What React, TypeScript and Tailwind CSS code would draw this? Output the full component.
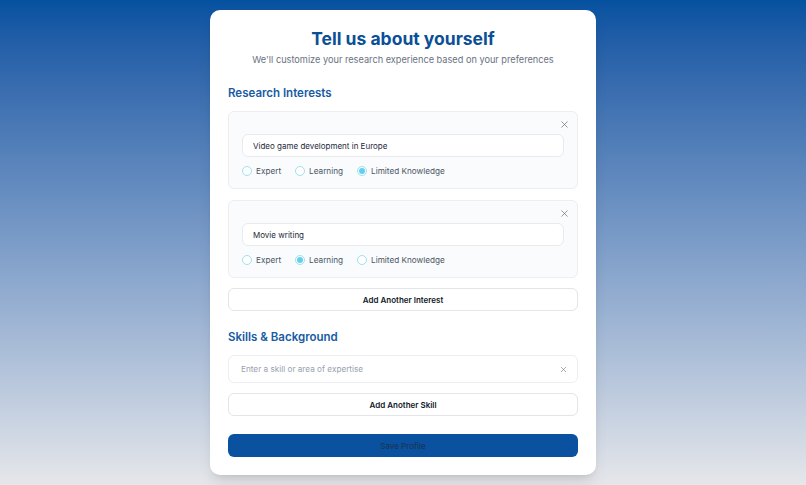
import React, { useState } from 'react';
import { X } from 'lucide-react';

type Level = 'Expert' | 'Learning' | 'Limited Knowledge';

const levels: Level[] = ['Expert', 'Learning', 'Limited Knowledge'];

function InterestCard({ topic, level }: { topic: string; level: Level }) {
  const [value, setValue] = useState<Level>(level);

  return (
    <div className="rounded-md border border-[#eceef1] bg-[#fafbfc] px-[13px] pt-[5px] pb-[11px]">
      <div className="-mr-[6px] flex h-[14px] items-center justify-end">
        <X className="h-[11px] w-[11px] text-gray-500" strokeWidth={1.6} />
      </div>
      <div className="mt-[3px] flex h-[23px] w-full items-center rounded-md border border-[#e8eaed] bg-white pl-[10px] text-[8px] text-gray-800">
        {topic}
      </div>
      <div className="mt-[8px] flex h-[12px] items-center gap-[14px]">
        {levels.map((l) => (
          <label key={l} className="flex cursor-pointer items-center gap-[4px]" onClick={() => setValue(l)}>
            <span className="flex h-[10px] w-[10px] items-center justify-center rounded-full border border-[#9fe0f2] bg-white">
              {value === l && <span className="h-[6px] w-[6px] rounded-full bg-[#5fd0ee]" />}
            </span>
            <span className="text-[8.2px] text-gray-600">{l}</span>
          </label>
        ))}
      </div>
    </div>
  );
}

function OutlineButton({ children }: { children: React.ReactNode }) {
  return (
    <button className="flex h-[23px] w-full items-center justify-center rounded-md border border-[#e3e5e8] bg-white text-[8px] font-semibold text-gray-900">
      {children}
    </button>
  );
}

export default function App() {
  return (
    <div
      className="flex min-h-screen justify-center bg-linear-to-b from-[#0451a0] to-[#e6e7ea] pt-[10px]"
      style={{ fontFamily: 'Inter, "Noto Sans", sans-serif' }}
    >
      <div className="h-[465px] w-[386px] rounded-[10px] bg-white px-[18px] pt-[17px] pb-[18px] shadow-lg">
        <h1 className="text-center text-[17.5px] leading-[23px] font-bold text-[#0b4f96]">Tell us about yourself</h1>
        <p className="mt-[4px] text-center text-[9.2px] leading-[12px] text-gray-500">
          We'll customize your research experience based on your preferences
        </p>

        <h2 className="mt-[20px] text-[11.5px] leading-[14px] font-semibold text-[#175ba4]">Research Interests</h2>
        <div className="mt-[11px] flex flex-col gap-[11px]">
          <InterestCard topic="Video game development in Europe" level="Limited Knowledge" />
          <InterestCard topic="Movie writing" level="Learning" />
        </div>
        <div className="mt-[10px]">
          <OutlineButton>Add Another Interest</OutlineButton>
        </div>

        <h2 className="mt-[19px] text-[11.5px] leading-[14px] font-semibold text-[#175ba4]">Skills &amp; Background</h2>
        <div className="mt-[11px] flex h-[28px] items-center justify-between rounded-md border border-[#eceef1] bg-white pr-[9px] pl-[12px]">
          <span className="text-[8.2px] text-gray-400">Enter a skill or area of expertise</span>
          <X className="h-[9px] w-[9px] text-gray-500" strokeWidth={1.6} />
        </div>
        <div className="mt-[10px]">
          <OutlineButton>Add Another Skill</OutlineButton>
        </div>

        <button className="mt-[18px] flex h-[23px] w-full items-center justify-center rounded-md bg-[#0a529f] text-[8px] font-medium text-[#1a3558]">
          Save Profile
        </button>
      </div>
    </div>
  );
}
